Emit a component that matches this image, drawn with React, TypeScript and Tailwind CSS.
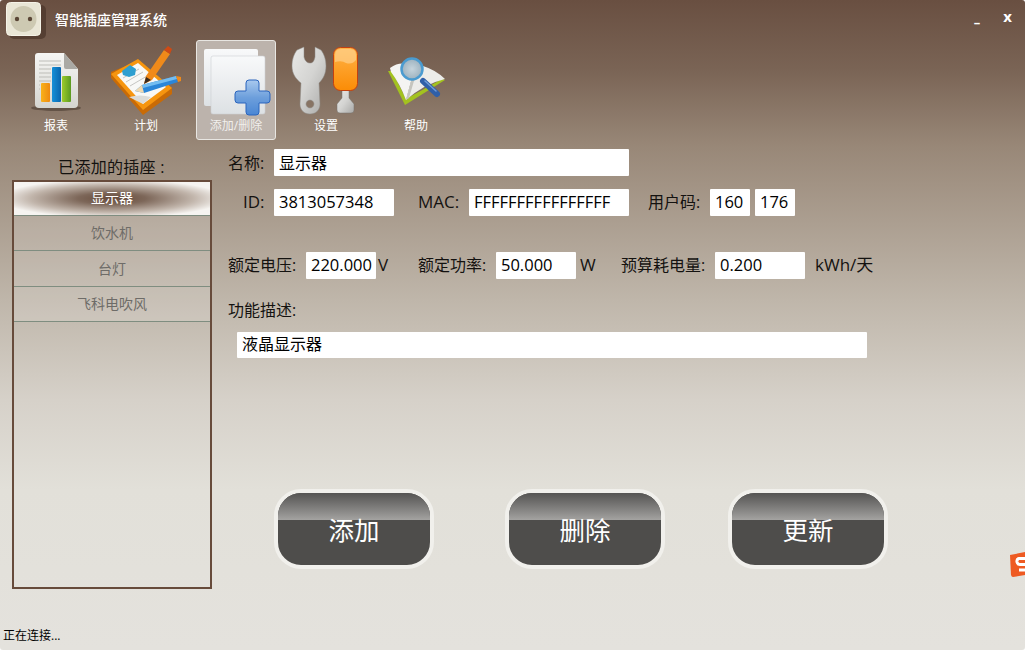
import type { ReactNode } from "react";

const tools = ["报表", "计划", "添加/删除", "设置", "帮助"];
const sockets = ["饮水机", "台灯", "飞科电吹风"];

const SocketLogo = () => (
  <svg width="44" height="40" viewBox="0 0 44 40" className="shrink-0">
    <rect x="3" y="3" width="37" height="34" rx="5" fill="#4a3529" opacity="0.7" />
    <rect x="0.500" y="0.500" width="34" height="33" rx="4" fill="#e9e6d6" stroke="#f5f3e8" />
    <circle cx="17.500" cy="17" r="13" fill="#cdc9b2" />
    <circle cx="11" cy="17" r="2.200" fill="#5a4636" />
    <circle cx="24" cy="17" r="2.200" fill="#5a4636" />
  </svg>
);

const ReportIcon = () => (
  <svg width="80" height="72" viewBox="0 0 80 72">
    <defs>
      <linearGradient id="doc" x1="0" y1="0" x2="0" y2="1">
        <stop offset="0" stopColor="#f6f6f4" />
        <stop offset="1" stopColor="#d5d5d0" />
      </linearGradient>
      <linearGradient id="barO" x1="0" y1="0" x2="1" y2="0">
        <stop offset="0" stopColor="#f9b21a" />
        <stop offset="1" stopColor="#ee8a10" />
      </linearGradient>
      <linearGradient id="barB" x1="0" y1="0" x2="1" y2="0">
        <stop offset="0" stopColor="#1590d8" />
        <stop offset="1" stopColor="#0a65ad" />
      </linearGradient>
      <linearGradient id="barG" x1="0" y1="0" x2="1" y2="0">
        <stop offset="0" stopColor="#9ccb2a" />
        <stop offset="1" stopColor="#5b9a22" />
      </linearGradient>
    </defs>
    <ellipse cx="40" cy="64" rx="25" ry="3" fill="#3d2f26" opacity="0.5" />
    <path d="M22 9H48L62 25V60Q62 64 58 64H23Q19 64 19 60V12Q19 9 22 9Z" fill="url(#doc)" />
    <path d="M48 9L62 25H50Q48 25 48 23Z" fill="#aaa9a4" />
    <path d="M23 17H45M23 21H45M23 25H35M23 29H35M23 33H35M23 37H35M23 41H24M23 45H24" stroke="#bdbdb8" />
    <rect x="25" y="39" width="9" height="19" rx="1" fill="url(#barO)" />
    <rect x="36" y="23" width="9" height="35" rx="1" fill="url(#barB)" />
    <rect x="46" y="32" width="9" height="26" rx="1" fill="url(#barG)" />
  </svg>
);

const PlanIcon = () => (
  <svg width="80" height="72" viewBox="0 0 80 72">
    <path d="M5 34L37 71L66 50V44L32 17L5 28Z" fill="#c96b06" />
    <path d="M5 30L32 15L66 44L37 66Z" fill="#f6950f" />
    <path d="M11 31L32 19L60 43L37 60Z" fill="#f8f8f6" />
    <path d="M17 34L33 25M20 38L37 28M24 42L41 32" stroke="#c5c5c2" />
    <path d="M23 53Q34 50 45 53L37 60Z" fill="#dcdcd8" />
    <path d="M16 27L24 21L30 25L29 31L23 33L17 31Z" fill="#2f9fd0" />
    <path d="M38 40L40 32L58 6L64 10L46 36Z" fill="#f08a1a" />
    <path d="M58 6L64 10L66 5L62 2Z" fill="#cf4a14" />
    <path d="M38 40L40 33L45 36Z" fill="#3b2a1e" />
    <path d="M29 47L36 41L70 32L72 38L38 49Z" fill="#2b86d8" />
    <path d="M36 41L70 32L71 35L37 44Z" fill="#74bdf0" />
    <path d="M70 32L75 33L75 37L72 38Z" fill="#f08a1a" />
    <path d="M29 47L36 41L38 49Z" fill="#f0d9b0" />
  </svg>
);

const AddIcon = () => (
  <svg width="80" height="72" viewBox="0 0 80 72">
    <defs>
      <linearGradient id="sheet" x1="0" y1="0" x2="0" y2="1">
        <stop offset="0" stopColor="#f8f9fa" />
        <stop offset="1" stopColor="#dde1e4" />
      </linearGradient>
      <linearGradient id="plus" x1="0" y1="0" x2="0" y2="1">
        <stop offset="0" stopColor="#a9c9ee" />
        <stop offset="0.5" stopColor="#6d9fdc" />
        <stop offset="1" stopColor="#4a86d4" />
      </linearGradient>
    </defs>
    <rect x="8" y="5" width="54" height="57" rx="2" fill="url(#sheet)" />
    <rect x="15" y="12" width="54" height="58" rx="2" fill="url(#sheet)" stroke="#ccd0d3" strokeWidth="0.600" />
    <path
      d="M53 36H60Q63 36 63 39V47H71Q74 47 74 50V56Q74 59 71 59H63V68Q63 71 60 71H53Q50 71 50 68V59H42Q39 59 39 56V50Q39 47 42 47H50V39Q50 36 53 36Z"
      fill="url(#plus)"
      stroke="#2a65bd"
    />
  </svg>
);

const ToolsIcon = () => (
  <svg width="80" height="72" viewBox="0 0 80 72">
    <defs>
      <linearGradient id="steel" x1="0" y1="0" x2="1" y2="1">
        <stop offset="0" stopColor="#e8e8e6" />
        <stop offset="0.5" stopColor="#d4d4d2" />
        <stop offset="1" stopColor="#a9a9a7" />
      </linearGradient>
      <linearGradient id="grip" x1="0" y1="0" x2="0" y2="1">
        <stop offset="0" stopColor="#ffb347" />
        <stop offset="1" stopColor="#fb8c06" />
      </linearGradient>
    </defs>
    <path
      fillRule="evenodd"
      d="M11 6C8 10 6 15 6 22C6 30 10 35 15 39L14 60C14 66 18 70 24 70C30 70 34 66 34 60L33 39C37 35 40 30 40 22C40 15 38 10 35 6L29 3V13C28 17 27 19 24 19C21 19 19 17 18 13V3ZM24 56A4 4 0 1 0 24.010 56Z"
      fill="url(#steel)"
      stroke="#8d8a86"
      strokeWidth="0.500"
    />
    <path d="M56 46H63V54L68 60V66Q68 69 65 69H54Q51 69 51 66V60L56 54Z" fill="url(#steel)" stroke="#77726d" strokeWidth="0.500" />
    <rect x="47.500" y="3.500" width="24" height="43" rx="7" fill="url(#grip)" stroke="#c3410f" />
    <path d="M49 18Q56 16 60 19Q66 21 70 16V11Q70 5 64 5H55Q49 5 49 11Z" fill="#ffd79a" opacity="0.600" />
  </svg>
);

const HelpIcon = () => (
  <svg width="80" height="72" viewBox="0 0 80 72">
    <defs>
      <radialGradient id="lens">
        <stop offset="0" stopColor="#c6d4dc" />
        <stop offset="1" stopColor="#9db2bf" />
      </radialGradient>
    </defs>
    <path d="M12 27L29 61L69 36L66 35L30 55L16 27Z" fill="#a3c21f" />
    <path d="M14 24Q24 17 33 21L37 30L30 56Q24 40 15 28Z" fill="#f4f4f2" />
    <path d="M47 22Q60 26 69 35Q48 40 30 56L37 30Z" fill="#ecece9" />
    <path d="M30 56L37 30L40 30L33 54Z" fill="#c5c5be" />
    <path d="M47 37L61 50" stroke="#2f5fa8" strokeWidth="6" strokeLinecap="round" />
    <path d="M49 37L60 47" stroke="#6f9bd8" strokeWidth="1.500" strokeLinecap="round" />
    <circle cx="36" cy="25" r="10.500" fill="url(#lens)" stroke="#4a9bd0" strokeWidth="2.500" />
  </svg>
);

const toolIcons: ReactNode[] = [
  <ReportIcon key="report" />,
  <PlanIcon key="plan" />,
  <AddIcon key="add" />,
  <ToolsIcon key="tools" />,
  <HelpIcon key="help" />,
];

const Field = ({ value, className }: { value: string; className: string }) => (
  <input
    readOnly
    value={value}
    className={`h-[27px] shrink-0 rounded-[1px] bg-white pb-[2px] pl-[5px] text-[16.5px] text-black outline-none ${className}`}
  />
);

const ActionButton = ({ label, className }: { label: string; className?: string }) => (
  <button
    className={`relative flex h-[80px] w-[160px] shrink-0 items-center justify-center overflow-hidden rounded-[27px] border-4 border-[#f1f0ec] bg-[#4e4d4b] pt-[2px] text-[25.500px] text-white ${className ?? ""}`}
  >
    <span className="absolute inset-x-0 top-0 h-[27px] bg-gradient-to-b from-[#555453] to-[#a4a3a1]" />
    <span className="relative">{label}</span>
  </button>
);

export default function App() {
  return (
    <div className="relative flex h-[650px] w-[1025px] flex-col overflow-hidden rounded-[3px] bg-[linear-gradient(180deg,#694f41_0px,#7a6455_70px,#988777_145px,#bfb6aa_300px,#d6d1c9_400px,#e2e0d9_490px,#e4e2dd_650px)] font-['Open_Sans','Noto_Sans_CJK_SC',sans-serif] text-[16px] text-[#141210]">
      <header className="flex h-[40px] shrink-0 items-start pl-[6px] pt-[2px]">
        <SocketLogo />
        <h1 className="ml-[5px] mt-[9px] text-[14px] font-medium leading-[18px] text-white">智能插座管理系统</h1>
        <div className="ml-auto mr-[13px] mt-[5px] flex items-start gap-[23px] text-[15px] font-bold leading-[18px] text-white">
          <span className="mt-[6px] text-[13px]">–</span>
          <span>x</span>
        </div>
      </header>

      <nav className="flex h-[100px] shrink-0 gap-[10px] pl-[16px]">
        {tools.map((tool, i) => (
          <div
            key={tool}
            className={`flex h-[100px] w-[80px] flex-col items-center rounded-[3px] border pt-[3px] text-[12px] leading-[16px] ${
              i === 2 ? "border-[#e8e6e2] bg-[#bcb3ac] text-[#f1efec]" : "border-transparent text-white"
            }`}
          >
            <span className="-mx-px h-[72px] w-[80px] shrink-0">{toolIcons[i]}</span>
            <span className="mt-[2px]">{tool}</span>
          </div>
        ))}
      </nav>

      <main className="flex flex-1 pl-[12px]">
        <aside className="flex w-[200px] shrink-0 flex-col">
          <h2 className="flex h-[40px] items-end justify-center pb-[2px] pr-[1px] text-[16px] font-normal leading-[22px] tracking-[0.3px]">已添加的插座 :</h2>
          <ul className="h-[409px] border-2 border-[#674b3b] text-center text-[14px] text-[#6e6c68]">
            <li className="flex h-[34px] items-center justify-center border-b border-[#7f8d80] bg-[radial-gradient(ellipse_58%_58%_at_center,#674b3b_0%,#7d6759_30%,#c2b6ac_72%,#f6f4f1_100%)] pb-[2px] text-white">
              显示器
            </li>
            {sockets.map((name, i) => (
              <li
                key={name}
                className={`flex h-[35.300px] items-center justify-center border-b border-[#7f8d80] bg-white/15 ${i === 0 ? "pb-[2px]" : ""}`}
              >
                {name}
              </li>
            ))}
          </ul>
          <p className="-ml-[9px] mt-[39px] text-[12px] leading-[16px] text-black">正在连接...</p>
        </aside>

        <section className="ml-[16px] flex flex-col pt-[9px]">
          <div className="flex h-[27px] items-center">
            <label className="w-[46px]">名称:</label>
            <Field value="显示器" className="w-[355px] text-[16px]" />
          </div>

          <div className="mt-[13px] flex h-[27px] items-center">
            <label className="ml-[15px] w-[31px] pb-[2px] text-[17px]">ID:</label>
            <Field value="3813057348" className="w-[120px]" />
            <label className="ml-[24px] w-[51px] pb-[2px] text-[17px]">MAC:</label>
            <Field value="FFFFFFFFFFFFFFFF" className="w-[160px]" />
            <label className="ml-[19px] w-[62px] pb-[2px]">用户码:</label>
            <Field value="160" className="w-[40px]" />
            <Field value="176" className="ml-[5px] w-[40px]" />
          </div>

          <div className="mt-[36px] flex h-[27px] items-center">
            <label className="w-[78px] pb-[2px]">额定电压:</label>
            <Field value="220.000" className="w-[70px]" />
            <span className="ml-[2px] w-[40px] pb-[2px] text-[17px]">V</span>
            <label className="w-[78px] pb-[2px]">额定功率:</label>
            <Field value="50.000" className="w-[80px]" />
            <span className="ml-[4px] w-[41px] pb-[2px] text-[17px]">W</span>
            <label className="w-[94px] pb-[2px]">预算耗电量:</label>
            <Field value="0.200" className="w-[90px]" />
            <span className="ml-[10px] pb-[2px] text-[17px]">kWh/天</span>
          </div>

          <label className="mt-[19px] h-[24px] leading-[24px]">功能描述:</label>
          <Field value="液晶显示器" className="ml-[9px] mt-[10px] !h-[26px] w-[630px] !pb-[4px] text-[16px]" />

          <div className="ml-[46px] mt-[131px] flex">
            <ActionButton label="添加" />
            <ActionButton label="删除" className="ml-[71px]" />
            <ActionButton label="更新" className="ml-[63px]" />
          </div>
        </section>
      </main>

      <svg width="16" height="26" viewBox="0 0 16 26" className="absolute right-0 top-[552px]">
        <path d="M1 3L16 0V23L4 25Q2.500 25 2 23Z" fill="#ee5a22" />
        <path d="M16 6.500H10Q7.500 7 8 10Q8.500 12.500 11 12.500H16M10 18H16" fill="none" stroke="#fff" strokeWidth="3" />
      </svg>
    </div>
  );
}
